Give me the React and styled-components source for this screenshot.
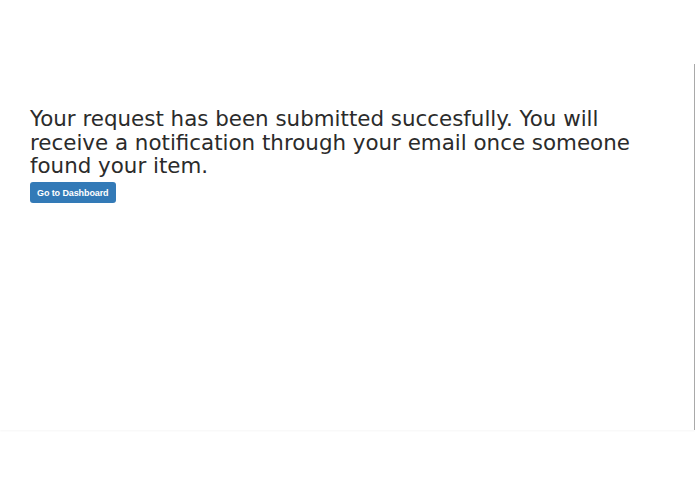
import React from 'react';
import styled, { createGlobalStyle } from 'styled-components';

const Global = createGlobalStyle`
  html, body {
    margin: 0;
    padding: 0;
    background: #fff;
  }
  body {
    font-family: "DejaVu Sans", "Liberation Sans", sans-serif;
    color: #333;
  }
`;

const Page = styled.div`
  width: 695px;
  height: 494px;
  overflow: hidden;
  background: #fff;
`;

const Frame = styled.div`
  margin-top: 64px;
  height: 366px;
  border-right: 1px solid #a9a9a9;
  box-shadow: 0 1px 2px rgba(0, 0, 0, 0.04);
  box-sizing: border-box;
`;

const Content = styled.div`
  padding: 43px 30px 0 30px;
`;

const Message = styled.h2`
  margin: 0 0 3px 0;
  font-size: 21.4px;
  font-weight: normal;
  line-height: 23.5px;
  color: #2b2b2b;
  max-width: 600px;
`;

const Button = styled.button`
  display: inline-flex;
  align-items: center;
  height: 21px;
  padding: 0 7px;
  border: none;
  border-radius: 3px;
  background: #337ab7;
  color: #fff;
  font-family: "Liberation Sans", Arial, sans-serif;
  font-size: 9px;
  font-weight: bold;
  letter-spacing: -0.1px;
  cursor: pointer;
`;

export default function App() {
  return (
    <Page>
      <Global />
      <Frame>
        <Content>
          <Message>
            Your request has been submitted succesfully. You will receive a notification through your email once someone found your item.
          </Message>
          <Button>Go to Dashboard</Button>
        </Content>
      </Frame>
    </Page>
  );
}
